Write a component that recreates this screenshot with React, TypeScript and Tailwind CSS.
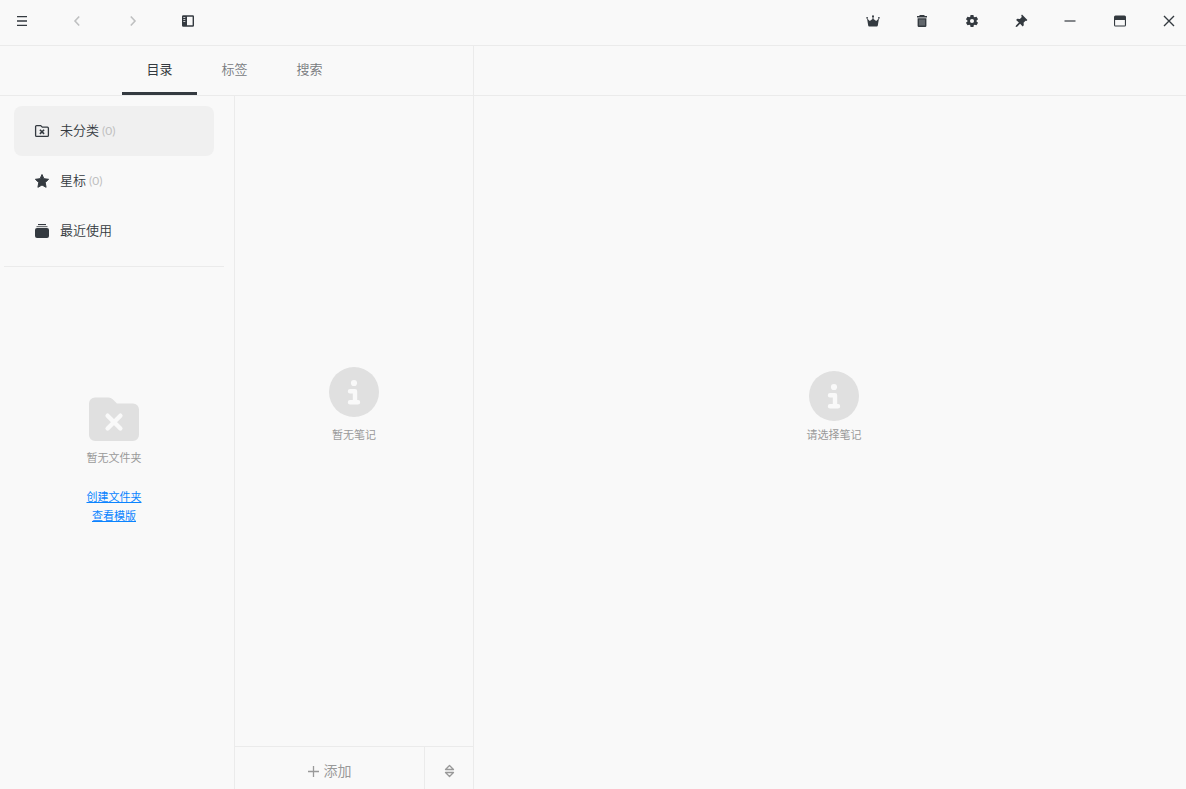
import type { ReactNode } from "react";

function ToolButton({ label, children, muted = false, left = false }: { label: string; children: ReactNode; muted?: boolean; left?: boolean }) {
  return (
    <button
      type="button"
      aria-label={label}
      className={`flex h-8 items-center justify-center ${left ? "w-11" : "w-[34px]"} ${muted ? "text-[#bfc0c1]" : "text-[#343a40]"}`}
    >
      {children}
    </button>
  );
}

const svg14 = { width: 14, height: 14, viewBox: "0 0 14 14", fill: "currentColor", "aria-hidden": true } as const;

function MenuIcon() {
  return (
    <svg {...svg14}>
      <path d="M2 2h10v1.300H2zM2 6.200h10v1.600H2zM2 10.700h10V12H2z" />
    </svg>
  );
}

function ChevronIcon({ d }: { d: string }) {
  return (
    <svg {...svg14} fill="none" stroke="currentColor" strokeWidth="1.600">
      <path d={d} />
    </svg>
  );
}

function PanelIcon() {
  return (
    <svg {...svg14}>
      <path fillRule="evenodd" d="M2.300 1.300h9.400A1.300 1.300 0 0 1 13 2.600v8.800a1.300 1.300 0 0 1-1.300 1.300H2.300A1.300 1.300 0 0 1 1 11.400V2.600a1.300 1.300 0 0 1 1.300-1.300zM6 2.700v8.600h5.600V2.700zM2.300 3.200v.9h2v-.9zM2.300 5.200v.9h2v-.9zM2.300 7.200v.9h2v-.9z" />
    </svg>
  );
}

function CrownIcon() {
  return (
    <svg {...svg14}>
      <path d="M2.200 11.500 1 4.200l2.800 2.900L6.500 5V2h1v3l2.700 2.100L13 4.200l-1.200 7.300a1 1 0 0 1-1 .9H3.200a1 1 0 0 1-1-.9z" />
      <circle cx="1.100" cy="3.800" r=".9" />
      <circle cx="7" cy="2.200" r="1" />
      <circle cx="12.900" cy="3.800" r=".9" />
    </svg>
  );
}

function TrashIcon() {
  return (
    <svg {...svg14}>
      <path d="M4.800 1h4.400l.6 1H12v1.500H2V2h2.200z" />
      <path d="M2.600 4.200h8.800v7.600a1.200 1.200 0 0 1-1.200 1.200H3.800a1.200 1.200 0 0 1-1.200-1.200z" />
      <path d="M5 5.500v6M7 5.500v6M9 5.500v6" stroke="#9b9ea1" strokeWidth=".9" />
    </svg>
  );
}

function GearIcon() {
  return (
    <svg {...svg14} viewBox="1 1 22 22">
      <path d="M19.140 12.940c.04-.3.060-.61.060-.94 0-.32-.02-.64-.07-.94l2.030-1.580c.18-.14.230-.41.120-.61l-1.920-3.320c-.12-.22-.37-.29-.59-.22l-2.390.96c-.5-.38-1.030-.7-1.620-.94l-.36-2.540c-.04-.24-.24-.41-.48-.41h-3.840c-.24 0-.43.170-.47.410l-.36 2.540c-.59.240-1.130.570-1.620.940l-2.390-.96c-.22-.08-.47 0-.59.220L2.740 8.870c-.12.210-.08.470.12.610l2.030 1.580c-.05.3-.09.630-.09.940s.02.640.070.940l-2.030 1.580c-.18.140-.23.410-.12.610l1.920 3.320c.12.220.37.290.59.220l2.390-.96c.5.380 1.030.7 1.620.940l.36 2.540c.05.240.24.410.48.410h3.840c.24 0 .44-.17.470-.41l.36-2.540c.59-.24 1.130-.56 1.620-.94l2.390.96c.22.080.47 0 .59-.22l1.920-3.320c.12-.22.070-.47-.12-.61zM12 15.200a3.200 3.200 0 1 1 0-6.400 3.200 3.200 0 0 1 0 6.400z" />
    </svg>
  );
}

function PinIcon() {
  return (
    <svg {...svg14}>
      <path d="M8 .6 13.400 5.900l-1 1-.9-.1-1.900 2 .2 2.500-1.100 1.100-2.600-2.600-3 2.900-1.500.4.400-1.500 2.900-3L2.100 5.900 3.200 4.800l2.700.1 1.900-1.800-.6-1.600z" />
    </svg>
  );
}

function MinimizeIcon() {
  return (
    <svg {...svg14}>
      <path d="M1.500 6.400h11v1.200h-11z" />
    </svg>
  );
}

function WindowIcon() {
  return (
    <svg {...svg14}>
      <path fillRule="evenodd" d="M2.500 1.500h9A1.500 1.500 0 0 1 13 3v8a1.500 1.500 0 0 1-1.500 1.500h-9A1.500 1.500 0 0 1 1 11V3a1.500 1.500 0 0 1 1.500-1.500zM2.100 6v5.500h9.800V6z" />
    </svg>
  );
}

function CloseIcon() {
  return (
    <svg {...svg14} fill="none" stroke="currentColor" strokeWidth="1.400">
      <path d="m2 2 10 10M12 2 2 12" />
    </svg>
  );
}

function FolderOutlineIcon() {
  return (
    <svg width="16" height="16" viewBox="0 0 16 16" fill="none" stroke="currentColor" strokeWidth="1.300" aria-hidden="true">
      <path d="M2.600 2.600h4.100L8.300 4.200h5.100a1 1 0 0 1 1 1v7.200a1 1 0 0 1-1 1H2.600a1 1 0 0 1-1-1V3.600a1 1 0 0 1 1-1z" />
      <path d="m5.900 6.700 4.200 4.200M10.100 6.700l-4.200 4.200" strokeWidth="1.600" />
    </svg>
  );
}

function StarIcon() {
  return (
    <svg width="16" height="16" viewBox="0 0 16 16" fill="currentColor" stroke="currentColor" strokeWidth="1" strokeLinejoin="round" aria-hidden="true">
      <path d="m8 1.500 1.900 4.200 4.700.6-3.400 3.200.9 4.800L8 12l-4.100 2.300.9-4.800-3.400-3.200 4.700-.6z" />
    </svg>
  );
}

function RecentIcon() {
  return (
    <svg width="16" height="16" viewBox="0 0 16 16" fill="currentColor" aria-hidden="true">
      <path d="M4 1h8v1.100H4z" />
      <path d="M2.500 3h11v1.200h-11z" opacity=".7" />
      <rect x="1" y="5" width="14" height="10" rx="2" />
    </svg>
  );
}

function InfoIcon() {
  return (
    <svg width="50" height="50" viewBox="0 0 50 50" aria-hidden="true">
      <circle cx="25" cy="25" r="25" fill="#e0e0e0" />
      <circle cx="25" cy="16" r="3.100" fill="#f9f9f9" />
      <path d="M21 24.200h5v11M21 35.200h8" fill="none" stroke="#f9f9f9" strokeWidth="4.400" strokeLinecap="round" strokeLinejoin="round" />
    </svg>
  );
}

function FolderEmptyIcon() {
  return (
    <svg width="50" height="44" viewBox="0 0 50 44" aria-hidden="true">
      <path d="M6 .5h13.500a6 6 0 0 1 4.200 1.700L28 6.500h16a6 6 0 0 1 6 6V38a6 6 0 0 1-6 6H6a6 6 0 0 1-6-6V6.500a6 6 0 0 1 6-6z" fill="#e0e0e0" />
      <path d="m18.600 18.700 12.800 12.800M31.400 18.700 18.600 31.500" stroke="#f9f9f9" strokeWidth="4.400" strokeLinecap="round" />
    </svg>
  );
}

function NavItem({ icon, label, count, active = false }: { icon: ReactNode; label: string; count?: number; active?: boolean }) {
  return (
    <li>
      <button
        type="button"
        className={`flex h-[50px] w-full items-center rounded-lg pl-5 text-[13px] text-[#343a40] ${active ? "bg-[#f0f0f0]" : ""}`}
      >
        <span className="mr-2.5">{icon}</span>
        <span className="font-[350]">
          {label}
          {count !== undefined && <span className="ml-[3px] font-['Lato',sans-serif] text-xs font-normal text-[#bfbfbf]">({count})</span>}
        </span>
      </button>
    </li>
  );
}

function Tab({ label, active = false }: { label: string; active?: boolean }) {
  return (
    <button
      type="button"
      role="tab"
      aria-selected={active}
      className={`w-[75px] border-b-[3px] pt-0.5 text-[13px] ${active ? "border-b-[#343a40] text-[#343a40]" : "border-b-transparent font-[350] text-[#777a7d]"}`}
    >
      {label}
    </button>
  );
}

export default function App() {
  return (
    <div className="flex h-screen flex-col bg-[#f9f9f9] font-['Noto_Sans','Noto_Sans_CJK_SC',sans-serif] text-[#343a40]">
      <header className="flex h-[46px] shrink-0 justify-between border-b border-[#ebebeb] pt-[5px]">
        <div className="flex w-[210px] justify-between">
          <ToolButton label="菜单" left><MenuIcon /></ToolButton>
          <ToolButton label="后退" left muted><ChevronIcon d="M9.200 2.500 5 7l4.200 4.500" /></ToolButton>
          <ToolButton label="前进" left muted><ChevronIcon d="M4.800 2.500 9 7l-4.200 4.500" /></ToolButton>
          <ToolButton label="侧栏" left><PanelIcon /></ToolButton>
        </div>
        <div className="flex w-[330px] justify-between">
          <ToolButton label="会员"><CrownIcon /></ToolButton>
          <ToolButton label="回收站"><TrashIcon /></ToolButton>
          <ToolButton label="设置"><GearIcon /></ToolButton>
          <ToolButton label="置顶"><PinIcon /></ToolButton>
          <ToolButton label="最小化"><MinimizeIcon /></ToolButton>
          <ToolButton label="最大化"><WindowIcon /></ToolButton>
          <ToolButton label="关闭"><CloseIcon /></ToolButton>
        </div>
      </header>

      <div className="flex min-h-0 flex-1">
        <div className="flex w-[474px] shrink-0 flex-col border-r border-[#ebebeb]">
          <div role="tablist" className="flex h-[50px] shrink-0 justify-center border-b border-[#ebebeb] pr-1">
            <Tab label="目录" active />
            <Tab label="标签" />
            <Tab label="搜索" />
          </div>
          <div className="flex min-h-0 flex-1">
            <aside className="flex w-[235px] shrink-0 flex-col border-r border-[#ebebeb] pr-1.5">
              <ul className="mt-2.5 px-3.5">
                <NavItem icon={<FolderOutlineIcon />} label="未分类" count={0} active />
                <NavItem icon={<StarIcon />} label="星标" count={0} />
                <NavItem icon={<RecentIcon />} label="最近使用" />
              </ul>
              <hr className="mx-1 mt-2.5 border-[#ebebeb]" />
              <div className="flex flex-1 flex-col items-center justify-center pb-[134px] text-[11px]">
                <FolderEmptyIcon />
                <p className="mt-2 leading-[18px] text-[#999999]">暂无文件夹</p>
                <a href="#create" className="mt-5 leading-[19px] text-[#0a84ff] underline">创建文件夹</a>
                <a href="#templates" className="leading-[19px] text-[#0a84ff] underline">查看模版</a>
              </div>
            </aside>
            <section className="flex min-w-0 flex-1 flex-col">
              <div className="flex flex-1 flex-col items-center justify-center pb-8 text-[11px] text-[#999999]">
                <InfoIcon />
                <p className="mt-[9px] leading-[18px]">暂无笔记</p>
              </div>
              <footer className="flex h-[43px] shrink-0 border-t border-[#ebebeb] text-[#999999]">
                <button type="button" className="flex flex-1 items-center justify-center gap-[5px] border-r border-[#ebebeb] pt-1.5 text-sm">
                  <svg width="11" height="11" viewBox="0 0 11 11" stroke="currentColor" strokeWidth="1.300" aria-hidden="true">
                    <path d="M5.500 0v11M0 5.500h11" />
                  </svg>
                  添加
                </button>
                <button type="button" aria-label="排序" className="flex w-12 items-center justify-center pt-1.5">
                  <svg width="12" height="14" viewBox="0 0 12 14" fill="none" stroke="currentColor" strokeWidth="1.300" strokeLinejoin="round" aria-hidden="true">
                    <path d="M6.500 1.500 10.500 5.500h-8zM6.500 12.500l4-4h-8z" />
                  </svg>
                </button>
              </footer>
            </section>
          </div>
        </div>
        <main className="flex min-w-0 flex-1 flex-col">
          <div className="h-[50px] shrink-0 border-b border-[#ebebeb]" />
          <div className="flex flex-1 flex-col items-center justify-center pb-[70px] pl-2 text-[11px] text-[#999999]">
            <InfoIcon />
            <p className="mt-[5px] leading-[18px]">请选择笔记</p>
          </div>
        </main>
      </div>
    </div>
  );
}
